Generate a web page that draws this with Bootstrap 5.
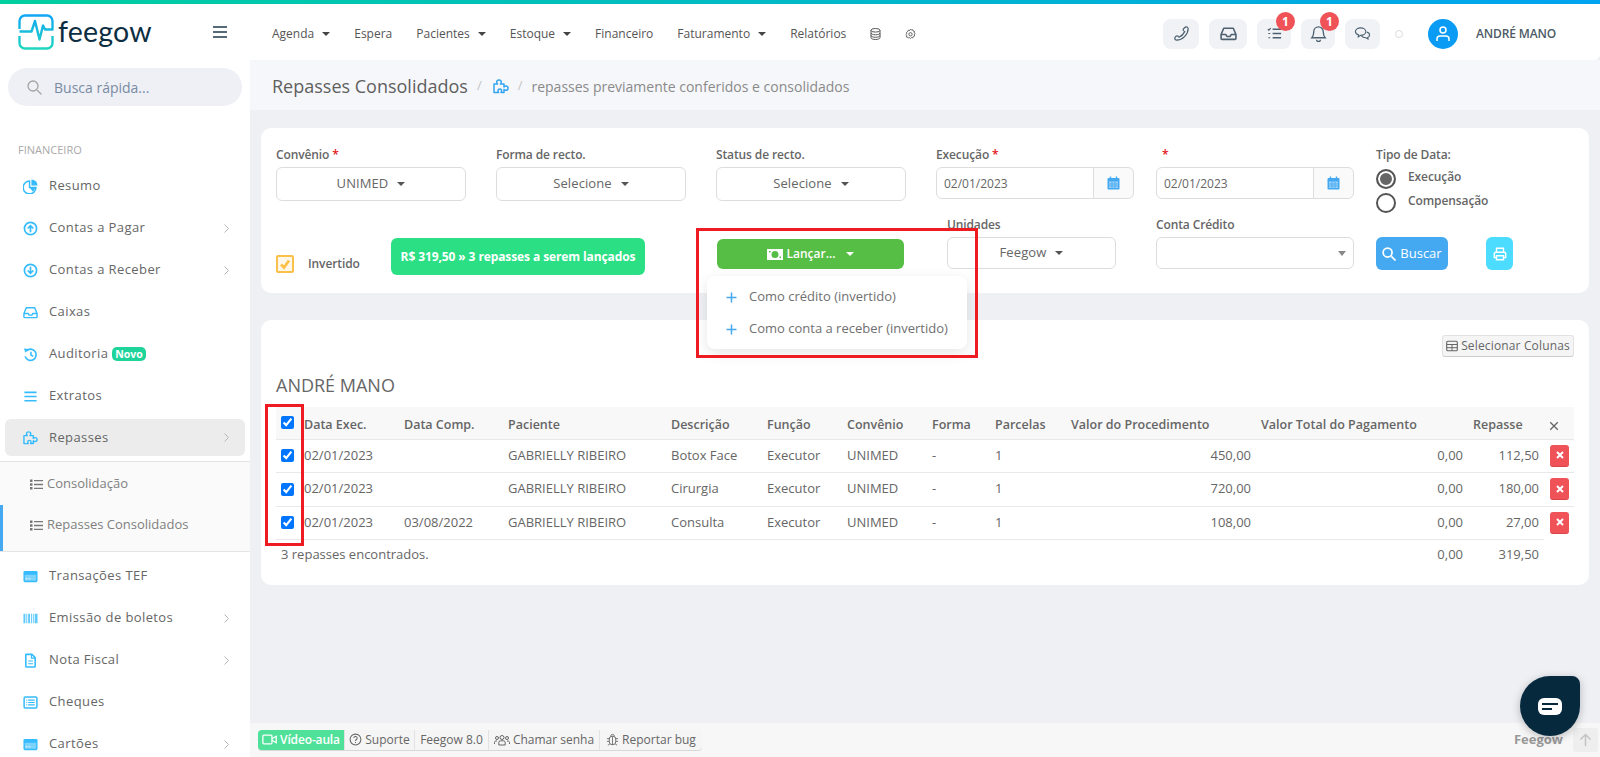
<!DOCTYPE html>
<html lang="pt-BR">
<head>
<meta charset="utf-8">
<title>Repasses Consolidados</title>
<link href="https://cdn.jsdelivr.net/npm/bootstrap@5.3.0/dist/css/bootstrap.min.css" rel="stylesheet">
<style>
html,body{height:757px;overflow:hidden}
body{font-family:"Open Sans","Liberation Sans",sans-serif;font-size:13px;color:#666;background:#eef0f4}
.topgrad{height:4px;background:linear-gradient(90deg,#00cf9f,#00a3f0)}
.shell{height:753px}
.sbar{width:250px;flex:none;background:#fff;overflow:hidden}
.sbar>*{flex:none}
.logo-row{height:56px;padding-left:18px;padding-right:23px}
.logo-txt{font-family:"Lato","Open Sans",sans-serif;font-size:28.5px;line-height:1;color:#0d2e42;margin-left:4px;margin-top:-2px;letter-spacing:.2px}
.burger{width:14px;height:12px;border-top:2px solid #566a78;border-bottom:2px solid #566a78;position:relative;margin-left:auto}
.burger::after{content:"";position:absolute;left:0;right:0;top:3px;height:2px;background:#566a78}
.srch{margin:8px 8px 0;height:38px;border-radius:19px;background:#eef0f5;padding-left:19px;color:#7a8ba3;font-size:14px;gap:12px}
.srch svg{color:#a5a5a5}
.sb-head{font-size:11px;color:#a9a9a9;margin:36px 0 0 18px;line-height:16px}
.sb-list{margin-top:7px}
.sb-item{height:42px;flex:none;padding-left:23px;padding-right:21px;color:#666;letter-spacing:.4px;gap:11px;background:transparent;border:0;border-radius:0}
.sb-item svg.mi{width:15px;height:15px;color:#36bcfd;flex:none}
.sb-item .chev{margin-left:auto;width:5px;height:9px;color:#b5b5b5}
.sb-act{position:relative;margin-top:2px;margin-bottom:5px;height:37px;padding-left:23px}
.sb-act::before{content:"";position:absolute;left:5px;right:5px;top:0;bottom:0;background:#ececec;border-radius:6px;z-index:0}
.sb-act>*{position:relative;z-index:1}
.sub-wrap{background:#fafafa;border-top:1px solid #e4e4e4;border-bottom:1px solid #e4e4e4;height:91px;flex:none;margin-bottom:3px}
.sub-item{height:43px;padding:1px 0 0 30px;font-size:13px;color:#808080;gap:4px}
.sub-item svg{width:13px;height:11px;color:#777;flex:none}
.sub-on{height:46px;padding:0 0 6px 27px;border-left:3px solid #45a9f2}
.novo{background:#1fd49b;color:#fff;font-size:10.5px;font-weight:700;border-radius:5px;padding:1px 3px;line-height:12px;letter-spacing:0;margin-left:-7px}
.main-col{min-width:0}
.tnav{height:56px;padding:3px 0 0 10px;background:#fff;border-bottom-right-radius:6px;flex:none}
.tnav .navbar-nav .nav-link{color:#555;font-size:12px;padding:0 12px;line-height:16px}
.tnav .dropdown-toggle::after{margin-left:8px;border-top:4px solid #444;border-right:4px solid transparent;border-left:4px solid transparent;border-bottom:0;vertical-align:2px}
.tnav .navbar-nav svg{width:11px;height:12px;color:#555;display:block}
.tb-wrap{gap:10px}
.tb-btn{height:30px;background:#f0f2f6;border-radius:8px;color:#4c6070;position:relative;flex:none}
.tb-btn svg{width:17px;height:17px;color:#4c6070}
.w36{width:36px}.w38{width:38px}.w34{width:34px}.w35{width:35px}
.tb-badge{position:absolute;top:-7px;right:-4px;width:19px;height:19px;border-radius:50%;background:#ef5358;color:#fff;font-size:12px;font-weight:700;line-height:19px;padding:0;text-align:center}
.tb-dot{width:8px;height:8px;border:1px solid #ddd;border-radius:50%;margin:0 25px 0 15px;flex:none}
.avatar{width:30px;height:30px;border-radius:50%;background:#0a9bf5;flex:none}
.avatar svg{width:18px;height:18px;color:#fff}
.uname{font-size:12px;font-weight:600;color:#4c5b66;margin:0 44px 0 18px;white-space:nowrap;letter-spacing:-.15px}
.crumb{height:50px;background:#f6f7fa;padding-left:22px;padding-top:2px;flex:none}
.crumb h1{font-size:18px;font-weight:400;color:#5f5f5f;margin:0;line-height:24px}
.crumb .sl{color:#c4c4c4;font-size:13px;margin:0 9px 0 9px}
.crumb svg{width:16px;height:16px;color:#36a5f0;margin-left:2px}
.crumb .subt{font-size:14px;color:#8a8a8a}
.content{padding:18px 11px 0;position:relative;flex:1 1 auto;min-height:0}
.pcard{background:#fff;border:0;border-radius:10px}
.f-card{height:165px;padding:18px 0 0 15px}
.f1{display:grid;grid-template-columns:220px 220px 220px 220px 220px auto;height:55px}
.f2{display:grid;grid-template-columns:115px 326px 230px 209px 220px 110px auto;height:59px;margin-top:15px;align-items:end}
.lbl{display:block;font-size:12px;font-weight:600;line-height:18px;margin:0 0 3px;color:#666;white-space:nowrap;letter-spacing:-.12px}
.req{color:#e3151a}
.sel-btn{width:190px;height:34px;background:#fff;border:1px solid #ddd;border-radius:6px;color:#666;font-size:13px;padding:0;letter-spacing:.1px;display:block;text-align:center}
.sel-btn.dropdown-toggle::after{margin-left:9px;vertical-align:2px;border-top:4px solid #555;border-right:4px solid transparent;border-left:4px solid transparent;border-bottom:0}
.dgrp{width:198px;height:32px;flex-wrap:nowrap}
.dgrp .form-control{height:32px;font-size:12px;color:#666;padding:0 7px;border-color:#ddd;border-radius:6px 0 0 6px}
.dgrp .input-group-text{width:41px;height:32px;background:#fafafa;border-color:#ddd;padding:0;justify-content:center;border-radius:0 6px 6px 0}
.dgrp svg{width:13px;height:14px;color:#45a9f2}
.rd-row{height:24px;gap:12px;font-size:12px;font-weight:600;line-height:20px;margin-top:-3px;letter-spacing:-.1px}
.rd-row+.rd-row{margin-top:0}
.rd-row span+span{padding-top:3px}
.rd{width:20px;height:20px;border:2px solid #555;border-radius:50%;flex:none;display:block;margin-top:5px;background:#fff}
.rd-on{background:#666;box-shadow:inset 0 0 0 2px #fff}
.chk-wrap{gap:14px;margin-bottom:2px;font-weight:600;font-size:12px;letter-spacing:-.1px}
.o-chk{width:18px;height:18px;border:2px solid #fbc04a;border-radius:2px;background:#fff8e8;flex:none}
.o-chk svg{width:12px;height:12px;color:#fbc04a}
.g-pill{width:254px;height:37px;background:#2bdf85;color:#fff;font-weight:700;font-size:12px;border-radius:6px;padding:0;letter-spacing:-.1px}
.l-btn{width:187px;height:30px;background:#56bd45;color:#fff;border:0;border-radius:6px;font-size:12px;font-weight:600;padding:0;margin-bottom:6px;gap:0}
.l-btn.dropdown-toggle::after{margin-left:10px;border-top:4px solid #fff;border-right:4px solid transparent;border-left:4px solid transparent;border-bottom:0;vertical-align:2px}
.l-btn svg{width:16px;height:11px;vertical-align:-1px;margin-right:3px}
.w169{width:169px;height:32px;margin-bottom:6px}
.csel{width:198px;height:32px;margin-bottom:6px;font-size:13px;border-color:#ddd;border-radius:6px;background-image:url("data:image/svg+xml,%3Csvg xmlns='http://www.w3.org/2000/svg' viewBox='0 0 8 5'%3E%3Cpath d='M0 0h8L4 5z' fill='%23888'/%3E%3C/svg%3E");background-size:8px 5px;background-position:right 7px center}
.b-btn{width:72px;height:33px;background:#45a9f2;color:#fff;border:0;border-radius:6px;font-size:13px;padding:0;margin-bottom:5px;gap:4px}
.b-btn svg{width:14px;height:14px}
.p-btn{width:27px;height:33px;background:#4cdcff;color:#fff;border:0;border-radius:6px;padding:0;margin-bottom:5px}
.p-btn svg{width:14px;height:14px}
.lan-menu{position:absolute;display:block;left:457px;top:166px;width:260px;height:73px;padding:5px 0 0;border:0;border-radius:8px;box-shadow:0 4px 14px rgba(0,0,0,.1);z-index:5;min-width:0}
.lan-menu .dropdown-item{height:32px;padding:0 0 0 19px;font-size:13px;color:#707070;gap:12px;display:flex;align-items:center}
.lan-menu svg{width:11px;height:11px;color:#45a9f2;flex:none}
.redbox{position:absolute;border:3px solid #ee1c22;z-index:6;pointer-events:none}
.rb-a{left:446px;top:118px;width:282px;height:130px}
.rb-b{left:15px;top:294px;width:39px;height:142px}
.t-card{height:265px;margin-top:27px;padding:15px}
.col-btn{height:22px;width:132px;padding:0;font-size:12px;color:#666;background:#f5f5f5;border:1px solid #e2e2e2;border-bottom-color:#ccc;border-radius:3px;gap:3px;letter-spacing:.15px}
.col-btn svg{width:12px;height:12px;color:#666}
.t-title{font-size:18px;font-weight:500;line-height:24px;margin:16px 0 10px;color:#666}
.rtab{table-layout:fixed;width:1298px;margin:0;color:#666;font-size:13px;--bs-table-color:#666;--bs-table-bg:transparent}
.rtab th,.rtab td{padding:0 5px;vertical-align:middle;border-bottom:1px solid #e9e9e9;white-space:nowrap}
.rtab thead th{height:32px;padding-top:6px;background:#f8f8f8;font-weight:600;color:#666;font-size:12.5px;box-shadow:none}
.rtab tbody td{height:33px}
.rtab tbody tr:nth-child(2) td{height:34px}
.rtab tfoot td{height:31px;border-bottom:0}
.rtab input{display:block;margin:0;position:relative}
.rtab thead input{top:-3px}
.rtab td.noline{border-bottom:0}
.del{width:19px;height:22px;padding:0;background:#ef5358;border:0;border-bottom:1px solid #d9454a;border-radius:3px;color:#fff;margin-left:1px}
.del svg{width:8px;height:8px}
.bbar{height:35px;background:#f7f7f7;padding:0 2px 0 8px;border-top:1px solid #f0f0f0;flex:none}
.bb{font-size:12px;color:#666;background:#f5f5f5;border:0;border-right:1px solid #e2e2e2;border-bottom:1px solid #d8d8d8;padding:0;height:21px;border-radius:0;gap:3px}
.bb svg{width:13px;height:13px;color:#666;flex:none}
.bb1{width:87px;background:#4fe19a;color:#fff;font-weight:600;border-radius:4px 0 0 4px;letter-spacing:-.15px}
.bb1 svg{color:#fff;width:15px;height:15px}
.bb2{width:70px}.bb3{width:74px}.bb4{width:111px}.bb5{width:102px;border-radius:0 4px 4px 0;border-right:0}
.bb4 svg{width:16px;height:14px}
.f-brand{margin-left:auto;font-weight:700;font-size:13px;color:#999;margin-right:10px}
.up-btn{width:25px;height:24px;background:#eeeeee;border-radius:3px;color:#c4c4c4}
.up-btn svg{width:13px;height:14px}
.chat-fab{position:fixed;left:1520px;top:676px;width:60px;height:60px;background:#06293e;border-radius:50% 8px 50% 50%;box-shadow:0 2px 8px rgba(0,0,0,.25);z-index:9}
.chat-fab svg{width:24px;height:17px}
</style>
</head>
<body>
<svg width="0" height="0" class="position-absolute">
<defs>
<symbol id="i-pie" viewBox="0 0 16 16"><path d="M7 2.2A6.8 6.8 0 1 0 13.8 9H7z" fill="none" stroke="currentColor" stroke-width="1.6"/><path d="M9 .5a6.500 6.500 0 0 1 6.500 6.500H9z" fill="currentColor"/><path d="M7.500 9.500h6l-3 4z" fill="currentColor"/></symbol>
<symbol id="i-up" viewBox="0 0 16 16"><circle cx="8" cy="8" r="6.500" fill="none" stroke="currentColor" stroke-width="1.800"/><path d="M8 12V5M5 8l3-3 3 3" fill="none" stroke="currentColor" stroke-width="1.800"/></symbol>
<symbol id="i-down" viewBox="0 0 16 16"><circle cx="8" cy="8" r="6.500" fill="none" stroke="currentColor" stroke-width="1.800"/><path d="M8 4v7M5 8l3 3 3-3" fill="none" stroke="currentColor" stroke-width="1.800"/></symbol>
<symbol id="i-inbox" viewBox="0 0 16 16"><path d="M1 9l2.500-6h9L15 9v3.500a1 1 0 0 1-1 1H2a1 1 0 0 1-1-1z M1 9h4.500l1 1.800h3l1-1.800H15" fill="none" stroke="currentColor" stroke-width="1.500" stroke-linejoin="round"/></symbol>
<symbol id="i-hist" viewBox="0 0 16 16"><path d="M3.500 4.300A6 6 0 1 1 2.300 10" fill="none" stroke="currentColor" stroke-width="1.800"/><path d="M1 1.500l5 .6-3.500 4z" fill="currentColor"/><path d="M8.500 5v3.500l2.500 1.500" fill="none" stroke="currentColor" stroke-width="1.600"/></symbol>
<symbol id="i-bars" viewBox="0 0 16 16"><path d="M1.500 3.500h13M1.500 8h13M1.500 12.500h13" stroke="currentColor" stroke-width="1.800"/></symbol>
<symbol id="i-puz" viewBox="0 0 16 16"><path d="M1 14.500V6h3.600c-.6-.5-.9-1.100-.9-1.800C3.700 2.900 4.800 2 6 2s2.300.9 2.300 2.200c0 .7-.3 1.300-.9 1.800H11v3c.5-.6 1.100-.9 1.800-.9 1.300 0 2.200 1 2.200 2.100s-.9 2.100-2.200 2.100c-.7 0-1.300-.3-1.800-.9v3H8c.4-.4.600-.9.600-1.500 0-1-.8-1.800-1.800-1.800S5 11.900 5 12.900c0 .6.200 1.100.6 1.600z" fill="none" stroke="currentColor" stroke-width="1.500" stroke-linejoin="round"/></symbol>
<symbol id="i-card" viewBox="0 0 16 16"><rect x=".5" y="2" width="15" height="12" rx="1.500" fill="currentColor"/><rect x="2" y="6.200" width="12" height="6.300" fill="#fff" opacity=".35"/><path d="M2.500 10.500h2.500M6 10.500h2" stroke="#fff" stroke-width=".8"/></symbol>
<symbol id="i-bar" viewBox="0 0 16 16"><path d="M.5 3h2v10h-2zM3.500 3h1v10h-1zM5.500 3h2v10h-2zM8.500 3h1v10h-1zM10.500 3h1v10h-1zM12.500 3h3v10h-3z" fill="currentColor" opacity=".8"/></symbol>
<symbol id="i-file" viewBox="0 0 16 16"><path d="M3 1.500h6.500L13 5v9a1 1 0 0 1-1 1H4a1 1 0 0 1-1-1z" fill="none" stroke="currentColor" stroke-width="1.700" stroke-linejoin="round"/><path d="M9 1.500V5.500h4M5.500 8.500h5M5.500 11.500h5" fill="none" stroke="currentColor" stroke-width="1.200"/></symbol>
<symbol id="i-chq" viewBox="0 0 16 16"><rect x="1.200" y="2.200" width="13.600" height="11.600" rx="1.200" fill="none" stroke="currentColor" stroke-width="1.600"/><path d="M3.500 5.500h1M5.500 5.500h7M3.500 8h1M5.500 8h7M3.500 10.500h1M5.500 10.500h7" stroke="currentColor" stroke-width="1.200"/></symbol>
<symbol id="i-chev" viewBox="0 0 5 9"><path d="M.5.500l4 4-4 4" fill="none" stroke="currentColor" stroke-width="1"/></symbol>
<symbol id="i-list" viewBox="0 0 13 11"><path d="M0 .5h2.500v2.500H0zM0 4.300h2.500v2.500H0zM0 8h2.500v2.500H0z" fill="currentColor"/><path d="M4 1.700h9M4 5.500h9M4 9.300h9" stroke="currentColor" stroke-width="1.300"/></symbol>
<symbol id="i-cal" viewBox="0 0 13 14"><path d="M1.500 2h10a1 1 0 0 1 1 1v9.500a1 1 0 0 1-1 1h-10a1 1 0 0 1-1-1V3a1 1 0 0 1 1-1z" fill="currentColor"/><path d="M3.500 .5v3M9.500 .5v3" stroke="currentColor" stroke-width="1.400"/><path d="M2 5.500h9v6.500H2z" fill="#fff" opacity=".45"/><path d="M2 8h9M2 10h9M5 6v6M8 6v6" stroke="currentColor" stroke-width=".8"/></symbol>
<symbol id="i-plus" viewBox="0 0 11 11"><path d="M5.500.5v10M.5 5.500h10" stroke="currentColor" stroke-width="1.500"/></symbol>
<symbol id="i-x" viewBox="0 0 8 8"><path d="M1 1l6 6M7 1L1 7" stroke="currentColor" stroke-width="2"/></symbol>
</defs>
</svg>

<div class="topgrad"></div>
<div class="shell d-flex">
  <aside class="sbar d-flex flex-column">
    <div class="logo-row d-flex align-items-center">
      <svg width="36" height="36" viewBox="0 0 36 36" fill="none">
        <defs><linearGradient id="lg" x1="0" y1="0" x2="0" y2="1"><stop offset="0" stop-color="#12a6f5"/><stop offset="1" stop-color="#1fd6c0"/></linearGradient></defs>
        <path d="M1.500 15V7a5.500 5.500 0 0 1 5.500-5.500h22A5.500 5.500 0 0 1 34.500 7v8.500H27l-2-4-3.500 14L17 7l-3.500 10.500H1.500M1.500 22v7A5.500 5.500 0 0 0 7 34.500h22a5.500 5.500 0 0 0 5.500-5.500v-7" stroke="url(#lg)" stroke-width="2.400" stroke-linejoin="round"/>
      </svg>
      <span class="logo-txt">feegow</span>
      <span class="burger"></span>
    </div>
    <div class="srch d-flex align-items-center">
      <svg width="15" height="15" viewBox="0 0 15 15" fill="none"><circle cx="6" cy="6" r="5" stroke="currentColor" stroke-width="1.300"/><path d="M10 10l4.500 4.500" stroke="currentColor" stroke-width="1.300"/></svg>
      <span>Busca rápida...</span>
    </div>
    <div class="sb-head">FINANCEIRO</div>
    <nav class="sb-list nav flex-column flex-nowrap">
      <a class="sb-item nav-link d-flex align-items-center"><svg class="mi"><use href="#i-pie"/></svg>Resumo</a>
      <a class="sb-item nav-link d-flex align-items-center"><svg class="mi"><use href="#i-up"/></svg>Contas a Pagar<svg class="chev"><use href="#i-chev"/></svg></a>
      <a class="sb-item nav-link d-flex align-items-center"><svg class="mi"><use href="#i-down"/></svg>Contas a Receber<svg class="chev"><use href="#i-chev"/></svg></a>
      <a class="sb-item nav-link d-flex align-items-center"><svg class="mi"><use href="#i-inbox"/></svg>Caixas</a>
      <a class="sb-item nav-link d-flex align-items-center"><svg class="mi"><use href="#i-hist"/></svg>Auditoria <span class="novo">Novo</span></a>
      <a class="sb-item nav-link d-flex align-items-center"><svg class="mi"><use href="#i-bars"/></svg>Extratos</a>
      <a class="sb-item sb-act nav-link d-flex align-items-center"><svg class="mi"><use href="#i-puz"/></svg><span>Repasses</span><svg class="chev"><use href="#i-chev"/></svg></a>
      <div class="sub-wrap">
        <a class="sub-item nav-link d-flex align-items-center"><svg><use href="#i-list"/></svg>Consolidação</a>
        <a class="sub-item sub-on nav-link d-flex align-items-center"><svg><use href="#i-list"/></svg>Repasses Consolidados</a>
      </div>
      <a class="sb-item nav-link d-flex align-items-center"><svg class="mi"><use href="#i-card"/></svg>Transações TEF</a>
      <a class="sb-item nav-link d-flex align-items-center"><svg class="mi"><use href="#i-bar"/></svg>Emissão de boletos<svg class="chev"><use href="#i-chev"/></svg></a>
      <a class="sb-item nav-link d-flex align-items-center"><svg class="mi"><use href="#i-file"/></svg>Nota Fiscal<svg class="chev"><use href="#i-chev"/></svg></a>
      <a class="sb-item nav-link d-flex align-items-center"><svg class="mi"><use href="#i-chq"/></svg>Cheques</a>
      <a class="sb-item nav-link d-flex align-items-center"><svg class="mi"><use href="#i-card"/></svg>Cartões<svg class="chev"><use href="#i-chev"/></svg></a>
    </nav>
  </aside>

  <div class="main-col flex-grow-1 d-flex flex-column">
    <nav class="tnav navbar navbar-expand flex-nowrap align-items-center">
      <ul class="navbar-nav align-items-center">
        <li class="nav-item"><a class="nav-link dropdown-toggle">Agenda</a></li>
        <li class="nav-item"><a class="nav-link">Espera</a></li>
        <li class="nav-item"><a class="nav-link dropdown-toggle">Pacientes</a></li>
        <li class="nav-item"><a class="nav-link dropdown-toggle">Estoque</a></li>
        <li class="nav-item"><a class="nav-link">Financeiro</a></li>
        <li class="nav-item"><a class="nav-link dropdown-toggle">Faturamento</a></li>
        <li class="nav-item"><a class="nav-link">Relatórios</a></li>
        <li class="nav-item"><a class="nav-link"><svg viewBox="0 0 11 12" fill="none"><ellipse cx="5.500" cy="2.300" rx="4.500" ry="1.800" stroke="currentColor"/><path d="M1 2.300v7.400c0 1 2 1.800 4.500 1.800s4.500-.8 4.500-1.800V2.300M1 5c0 1 2 1.800 4.500 1.800S10 6 10 5M1 7.500c0 1 2 1.800 4.500 1.800s4.500-.8 4.500-1.800" stroke="currentColor"/></svg></a></li>
        <li class="nav-item"><a class="nav-link"><svg viewBox="0 0 12 12" fill="none"><path d="M6 .7l1 1 1.500-.3.500 1.400 1.400.5-.3 1.500 1 1-1 1 .3 1.500-1.400.5-.5 1.400-1.500-.3-1 1-1-1-1.500.3L3 9.800l-1.400-.5.3-1.500-1-1 1-1-.3-1.500L3 3.300l.5-1.400 1.500.3z" stroke="currentColor"/><circle cx="6" cy="6.300" r="1.800" stroke="currentColor"/></svg></a></li>
      </ul>
      <div class="ms-auto d-flex align-items-center">
        <div class="d-flex tb-wrap">
          <a class="tb-btn w36 d-flex align-items-center justify-content-center"><svg viewBox="0 0 18 18" fill="none"><path d="M4 16c-1.500 0-2.500-1.200-2-2.500l1-1.500c.7-.8 2-.8 2.600 0l.8 1c2.800-1.300 4.800-3.500 6-6l-1-.8c-.8-.7-.8-1.800 0-2.600L13.500 2c1.300-.5 2.500.5 2.500 2 0 6-6 12-12 12z" stroke="currentColor" stroke-width="1.300"/></svg></a>
          <a class="tb-btn w38 d-flex align-items-center justify-content-center"><svg viewBox="0 0 16 16"><use href="#i-inbox"/></svg></a>
          <a class="tb-btn w34 d-flex align-items-center justify-content-center"><svg viewBox="0 0 18 18" fill="none"><path d="M7 4.500h9M7 9h9M7 13.500h9" stroke="currentColor" stroke-width="1.400"/><path d="M2 4.500l1 1 2-2.200M2.500 9h2M2.500 13.500h2" stroke="currentColor" stroke-width="1.300"/></svg><span class="tb-badge badge">1</span></a>
          <a class="tb-btn w34 d-flex align-items-center justify-content-center"><svg viewBox="0 0 18 18" fill="none"><path d="M9 2a5 5 0 0 0-5 5c0 4-1.500 6-2 6.500h14c-.5-.5-2-2.500-2-6.500a5 5 0 0 0-5-5zM7 15.500a2 2 0 0 0 4 0" stroke="currentColor" stroke-width="1.400"/></svg><span class="tb-badge badge">1</span></a>
          <a class="tb-btn w35 d-flex align-items-center justify-content-center"><svg viewBox="0 0 18 18" fill="none"><path d="M7 3c3 0 5.500 1.700 5.500 4s-2.500 4-5.500 4l-2.500 1.500.3-2C2.800 10 1.500 8.600 1.500 7 1.500 4.700 4 3 7 3z" stroke="currentColor" stroke-width="1.200"/><path d="M13.500 7.500c1.800.4 3 1.500 3 3 0 1.200-.8 2.200-2 2.700l.3 1.500-2.300-1.200c-2 0-3.700-.6-4.500-1.800" stroke="currentColor" stroke-width="1.200"/></svg></a>
        </div>
        <span class="tb-dot"></span>
        <span class="avatar d-flex align-items-center justify-content-center"><svg viewBox="0 0 18 18" fill="none"><circle cx="9" cy="5" r="3" stroke="currentColor" stroke-width="1.500"/><path d="M3 16v-2a3 3 0 0 1 3-3h6a3 3 0 0 1 3 3v2" stroke="currentColor" stroke-width="1.500"/></svg></span>
        <span class="uname">ANDRÉ MANO</span>
      </div>
    </nav>

    <div class="crumb d-flex align-items-center">
      <h1>Repasses Consolidados</h1><span class="sl">/</span>
      <svg><use href="#i-puz"/></svg><span class="sl">/</span>
      <span class="subt">repasses previamente conferidos e consolidados</span>
    </div>

    <div class="content">
      <div class="pcard f-card">
        <div class="f1">
          <div><label class="lbl">Convênio <span class="req">*</span></label><button class="sel-btn btn dropdown-toggle">UNIMED</button></div>
          <div><label class="lbl">Forma de recto.</label><button class="sel-btn btn dropdown-toggle">Selecione</button></div>
          <div><label class="lbl">Status de recto.</label><button class="sel-btn btn dropdown-toggle">Selecione</button></div>
          <div><label class="lbl">Execução <span class="req">*</span></label>
            <div class="dgrp input-group"><input class="form-control" value="02/01/2023"><span class="input-group-text"><svg><use href="#i-cal"/></svg></span></div></div>
          <div><label class="lbl">&nbsp;&nbsp;<span class="req">*</span></label>
            <div class="dgrp input-group"><input class="form-control" value="02/01/2023"><span class="input-group-text"><svg><use href="#i-cal"/></svg></span></div></div>
          <div><label class="lbl">Tipo de Data:</label>
            <div class="rd-row d-flex"><span class="rd rd-on"></span><span>Execução</span></div>
            <div class="rd-row d-flex"><span class="rd"></span><span>Compensação</span></div>
          </div>
        </div>
        <div class="f2">
          <div class="chk-wrap d-flex align-items-center"><span class="o-chk d-flex align-items-center justify-content-center"><svg viewBox="0 0 12 12" fill="none"><path d="M2 6.500l3 3 5-7" stroke="currentColor" stroke-width="2.800"/></svg></span><span>Invertido</span></div>
          <div><span class="g-pill badge d-flex align-items-center justify-content-center">R$ 319,50 » 3 repasses a serem lançados</span></div>
          <div class="dropdown"><button class="l-btn btn dropdown-toggle d-flex align-items-center justify-content-center"><svg viewBox="0 0 16 11"><path fill-rule="evenodd" d="M0 0h16v11H0zM8 2a3.500 3.500 0 1 0 0 7 3.500 3.500 0 0 0 0-7zM2 2v1.500h1.500V2zM12.500 7.500V9H14V7.500z" fill="currentColor"/></svg>Lançar...</button></div>
          <div><label class="lbl">Unidades</label><button class="sel-btn w169 btn dropdown-toggle">Feegow</button></div>
          <div><label class="lbl">Conta Crédito</label><select class="csel form-select"><option></option></select></div>
          <div><button class="b-btn btn d-flex align-items-center justify-content-center"><svg viewBox="0 0 15 15" fill="none"><circle cx="6" cy="6" r="4.800" stroke="currentColor" stroke-width="1.800"/><path d="M10 10l4.500 4.500" stroke="currentColor" stroke-width="1.800"/></svg>Buscar</button></div>
          <div><button class="p-btn btn d-flex align-items-center justify-content-center"><svg viewBox="0 0 16 16" fill="none"><path d="M4 6V1.500h8V6M4 12H1.500V7.500A1.500 1.500 0 0 1 3 6h10a1.500 1.500 0 0 1 1.500 1.500V12H12M4 10h8v4.500H4z" stroke="currentColor" stroke-width="1.600"/></svg></button></div>
        </div>
      </div>

      <ul class="lan-menu dropdown-menu list-unstyled mb-0">
        <li><a class="dropdown-item"><svg><use href="#i-plus"/></svg>Como crédito (invertido)</a></li>
        <li><a class="dropdown-item"><svg><use href="#i-plus"/></svg>Como conta a receber (invertido)</a></li>
      </ul>
      <div class="redbox rb-a"></div>

      <div class="pcard t-card">
        <div class="d-flex justify-content-end"><button class="col-btn btn d-flex align-items-center justify-content-center"><svg viewBox="0 0 12 12" fill="none"><rect x=".7" y="1.200" width="10.600" height="9.600" rx="1" stroke="currentColor" stroke-width="1.100"/><path d="M.7 4.500h10.600M.7 7.700h10.600M6 4.500v6.300" stroke="currentColor"/></svg>Selecionar Colunas</button></div>
        <h2 class="t-title">ANDRÉ MANO</h2>
        <table class="rtab table">
          <colgroup><col style="width:23px"><col style="width:100px"><col style="width:104px"><col style="width:163px"><col style="width:96px"><col style="width:80px"><col style="width:85px"><col style="width:63px"><col style="width:76px"><col style="width:190px"><col style="width:212px"><col style="width:76px"><col style="width:30px"></colgroup>
          <thead><tr>
            <th><input type="checkbox" checked></th><th>Data Exec.</th><th>Data Comp.</th><th>Paciente</th><th>Descrição</th><th>Função</th><th>Convênio</th><th>Forma</th><th>Parcelas</th><th>Valor do Procedimento</th><th>Valor Total do Pagamento</th><th>Repasse</th>
            <th><svg width="10" height="10" viewBox="0 0 8 8"><path d="M1 1l6 6M7 1L1 7" stroke="#666" stroke-width="1.100"/></svg></th>
          </tr></thead>
          <tbody>
            <tr><td><input type="checkbox" checked></td><td>02/01/2023</td><td></td><td>GABRIELLY RIBEIRO</td><td>Botox Face</td><td>Executor</td><td>UNIMED</td><td>-</td><td>1</td><td class="text-end">450,00</td><td class="text-end">0,00</td><td class="text-end">112,50</td><td><button class="del btn d-flex align-items-center justify-content-center"><svg><use href="#i-x"/></svg></button></td></tr>
            <tr><td><input type="checkbox" checked></td><td>02/01/2023</td><td></td><td>GABRIELLY RIBEIRO</td><td>Cirurgia</td><td>Executor</td><td>UNIMED</td><td>-</td><td>1</td><td class="text-end">720,00</td><td class="text-end">0,00</td><td class="text-end">180,00</td><td><button class="del btn d-flex align-items-center justify-content-center"><svg><use href="#i-x"/></svg></button></td></tr>
            <tr><td><input type="checkbox" checked></td><td>02/01/2023</td><td>03/08/2022</td><td>GABRIELLY RIBEIRO</td><td>Consulta</td><td>Executor</td><td>UNIMED</td><td>-</td><td>1</td><td class="text-end">108,00</td><td class="text-end">0,00</td><td class="text-end">27,00</td><td class="noline"><button class="del btn d-flex align-items-center justify-content-center"><svg><use href="#i-x"/></svg></button></td></tr>
          </tbody>
          <tfoot><tr><td colspan="9">3 repasses encontrados.</td><td></td><td class="text-end">0,00</td><td class="text-end">319,50</td><td></td></tr></tfoot>
        </table>
      </div>
      <div class="redbox rb-b"></div>
    </div>

    <div class="bbar d-flex align-items-center">
      <div class="d-flex">
        <button class="bb bb1 btn d-flex align-items-center justify-content-center"><svg viewBox="0 0 14 14" fill="none"><rect x=".8" y="3" width="8.500" height="8" rx="1" stroke="currentColor" stroke-width="1.200"/><path d="M9.300 6.300l4-2.300v6l-4-2.300" stroke="currentColor" stroke-width="1.200"/></svg>Vídeo-aula</button>
        <button class="bb bb2 btn d-flex align-items-center justify-content-center"><svg viewBox="0 0 14 14" fill="none"><circle cx="7" cy="7" r="5.800" stroke="currentColor" stroke-width="1.100"/><path d="M5.200 5.500a1.800 1.800 0 1 1 2.800 1.500c-.7.400-1 .8-1 1.500M7 9.700v1.200" stroke="currentColor" stroke-width="1.100"/></svg>Suporte</button>
        <button class="bb bb3 btn d-flex align-items-center justify-content-center">Feegow 8.0</button>
        <button class="bb bb4 btn d-flex align-items-center justify-content-center"><svg viewBox="0 0 16 14" fill="none"><circle cx="8" cy="4.500" r="2" stroke="currentColor"/><circle cx="3" cy="5" r="1.500" stroke="currentColor"/><circle cx="13" cy="5" r="1.500" stroke="currentColor"/><path d="M4.800 12V9.500a1.700 1.700 0 0 1 1.700-1.700h3a1.700 1.700 0 0 1 1.700 1.700V12zM.5 11V9.500C.5 8.500 1.200 8 2 8h1M15.500 11V9.500c0-1-.7-1.500-1.500-1.500h-1" stroke="currentColor"/></svg>Chamar senha</button>
        <button class="bb bb5 btn d-flex align-items-center justify-content-center"><svg viewBox="0 0 14 14" fill="none"><rect x="3.500" y="3.500" width="7" height="9" rx="3" stroke="currentColor"/><path d="M5 3.500a2 2 0 0 1 4 0M3.500 6H1M13 6h-2.500M3.500 9H1M13 9h-2.500M7 4v8.500M4 12l-2 1M10 12l2 1" stroke="currentColor" stroke-width=".9"/></svg>Reportar bug</button>
      </div>
      <span class="f-brand">Feegow</span>
      <span class="up-btn d-flex align-items-center justify-content-center"><svg viewBox="0 0 13 14" fill="none"><path d="M6.500 13V1.500M1.500 6.500l5-5 5 5" stroke="currentColor" stroke-width="1.500"/></svg></span>
    </div>
  </div>
</div>

<a class="chat-fab d-flex align-items-center justify-content-center"><svg viewBox="0 0 24 17"><rect width="24" height="17" rx="6" fill="#fff"/><path d="M4 6h16M4 11h10" stroke="#06293e" stroke-width="2"/></svg></a>
<script src="https://cdn.jsdelivr.net/npm/bootstrap@5.3.0/dist/js/bootstrap.bundle.min.js"></script>
</body>
</html>
